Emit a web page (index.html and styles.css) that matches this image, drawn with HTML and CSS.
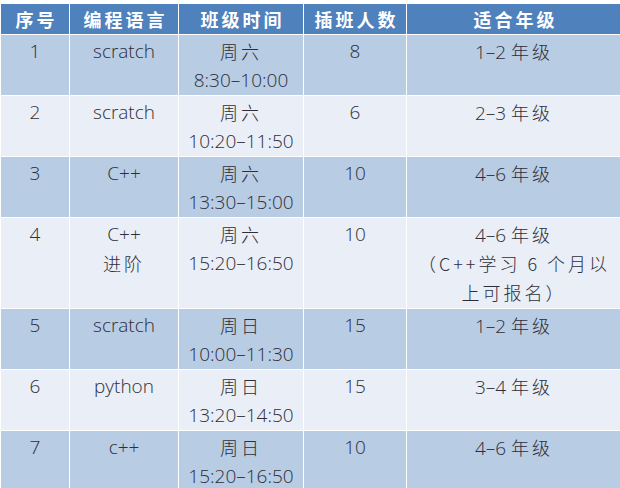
FILE: index.html
```html
<!DOCTYPE html>
<html lang="zh-CN">
<head>
<meta charset="utf-8">
<link rel="stylesheet" href="styles.css">
</head>
<body>
<div class="table">
  <div class="th">序号</div>
  <div class="th">编程语言</div>
  <div class="th">班级时间</div>
  <div class="th">插班人数</div>
  <div class="th">适合年级</div>

  <div class="td dark"><div class="ln">1</div></div>
  <div class="td dark"><div class="ln">scratch</div></div>
  <div class="td dark"><div class="ln cjk">周六</div><div class="ln">8:30–10:00</div></div>
  <div class="td dark"><div class="ln">8</div></div>
  <div class="td dark"><div class="ln">1–2 <span class="cjk">年级</span></div></div>

  <div class="td light"><div class="ln">2</div></div>
  <div class="td light"><div class="ln">scratch</div></div>
  <div class="td light"><div class="ln cjk">周六</div><div class="ln">10:20–11:50</div></div>
  <div class="td light"><div class="ln">6</div></div>
  <div class="td light"><div class="ln">2–3 <span class="cjk">年级</span></div></div>

  <div class="td dark"><div class="ln">3</div></div>
  <div class="td dark"><div class="ln">C++</div></div>
  <div class="td dark"><div class="ln cjk">周六</div><div class="ln">13:30–15:00</div></div>
  <div class="td dark"><div class="ln">10</div></div>
  <div class="td dark"><div class="ln">4–6 <span class="cjk">年级</span></div></div>

  <div class="td light"><div class="ln">4</div></div>
  <div class="td light"><div class="ln">C++</div><div class="ln cjk">进阶</div></div>
  <div class="td light"><div class="ln cjk">周六</div><div class="ln">15:20–16:50</div></div>
  <div class="td light"><div class="ln">10</div></div>
  <div class="td light"><div class="ln">4–6 <span class="cjk">年级</span></div><div class="ln cjk">（C++学习 6 个月以</div><div class="ln cjk">上可报名）</div></div>

  <div class="td dark"><div class="ln">5</div></div>
  <div class="td dark"><div class="ln">scratch</div></div>
  <div class="td dark"><div class="ln cjk">周日</div><div class="ln">10:00–11:30</div></div>
  <div class="td dark"><div class="ln">15</div></div>
  <div class="td dark"><div class="ln">1–2 <span class="cjk">年级</span></div></div>

  <div class="td light"><div class="ln">6</div></div>
  <div class="td light"><div class="ln">python</div></div>
  <div class="td light"><div class="ln cjk">周日</div><div class="ln">13:20–14:50</div></div>
  <div class="td light"><div class="ln">15</div></div>
  <div class="td light"><div class="ln">3–4 <span class="cjk">年级</span></div></div>

  <div class="td dark"><div class="ln">7</div></div>
  <div class="td dark"><div class="ln">c++</div></div>
  <div class="td dark"><div class="ln cjk">周日</div><div class="ln">15:20–16:50</div></div>
  <div class="td dark"><div class="ln">10</div></div>
  <div class="td dark"><div class="ln">4–6 <span class="cjk">年级</span></div></div>
</div>
</body>
</html>
```

FILE: styles.css
```css
html, body {
  margin: 0;
  padding: 0;
  background: #ffffff;
  overflow: hidden;
  width: 620px;
  height: 488px;
}

.table {
  display: grid;
  grid-template-columns: 68px 108px 124px 102px 214px;
  grid-template-rows: 30px 60px 60px 60px 90px 60px 60px 60px;
  gap: 1px;
  margin: 4px 0 0 1px;
  background: #ffffff;
}

.th {
  background: #4f81bd;
  color: #ffffff;
  font-family: "Noto Sans CJK SC", sans-serif;
  font-weight: bold;
  font-size: 18px;
  letter-spacing: 3px;
  text-indent: 3px;
  line-height: 30px;
  text-align: center;
  white-space: nowrap;
}

.td {
  font-family: "Open Sans", "Noto Sans CJK SC", sans-serif;
  font-weight: 300;
  font-size: 19px;
  color: #2e2e38;
  text-align: center;
  white-space: nowrap;
  padding-top: 2px;
  box-sizing: border-box;
}

.ln {
  height: 29px;
  line-height: 29px;
  overflow: visible;
}

.cjk {
  font-family: "Noto Sans CJK SC", sans-serif;
  font-weight: 300;
  font-size: 18px;
  letter-spacing: 3px;
}

.dark {
  background: #b8cce4;
}

.light {
  background: #e9eef7;
}
```
